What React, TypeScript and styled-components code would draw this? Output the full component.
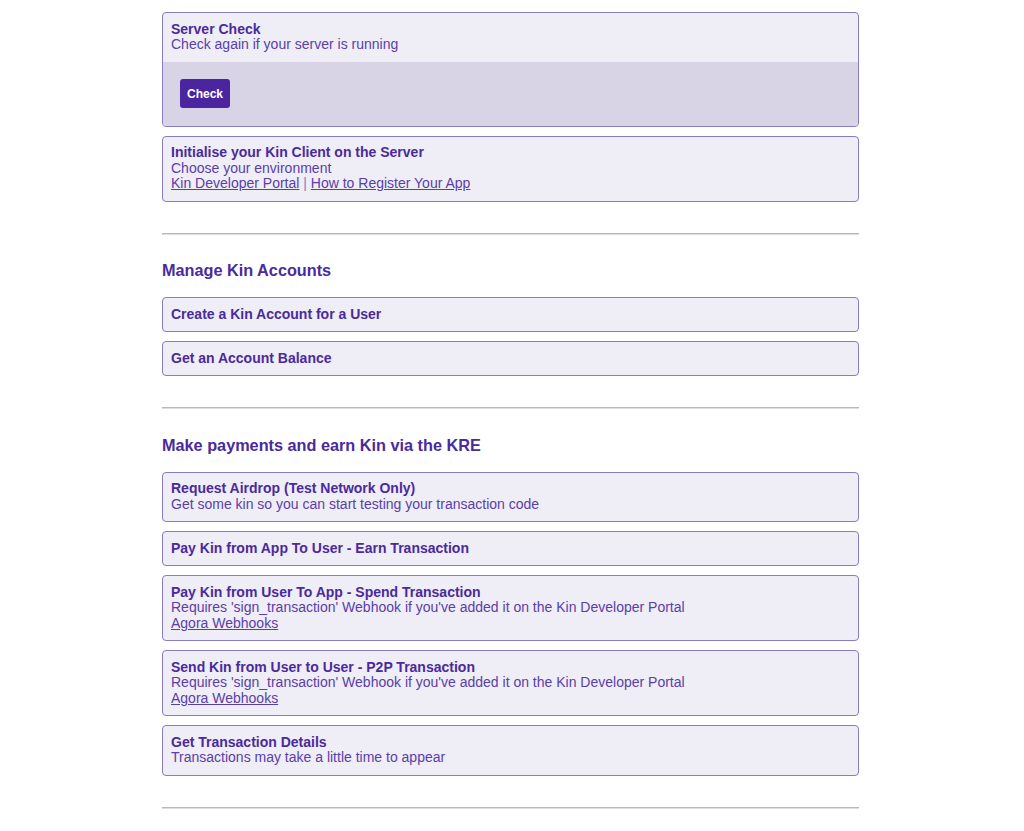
import React from "react";
import styled, { createGlobalStyle } from "styled-components";

const Global = createGlobalStyle`
  html, body { margin: 0; padding: 0; background: #ffffff; }
  body { font-family: "Liberation Sans", Arial, sans-serif; }
`;

const Page = styled.main`
  width: 697px;
  padding: 12px 0 0 162px;
  display: flex;
  flex-direction: column;
`;

const Card = styled.section<{ $gap?: number }>`
  border: 1px solid #8a7cc2;
  border-radius: 4px;
  background: #efedf5;
  overflow: hidden;
  margin-top: ${(p) => (p.$gap ?? 9)}px;
  color: #4a2a9c;
`;

const CardHeader = styled.div`
  padding: 8.5px 8px 9px 8px;
  display: flex;
  flex-direction: column;
`;

const Title = styled.div`
  font-size: 14px;
  line-height: 15.5px;
  font-weight: bold;
  color: #4a2a9c;
`;

const Text = styled.div`
  font-size: 14px;
  line-height: 15.5px;
  color: #5a3eaa;
`;

const Link = styled.a`
  color: #5a3eaa;
  text-decoration: underline;
  cursor: pointer;
`;

const Sep = styled.span`
  color: #8a7cc2;
`;

const CardBody = styled.div`
  background: #d9d4e5;
  padding: 17.5px 17px 17.5px;
`;

const Button = styled.button`
  display: block;
  font-family: "Liberation Sans", Arial, sans-serif;
  font-size: 12px;
  font-weight: bold;
  color: #ffffff;
  background: #4b24a0;
  border: none;
  border-radius: 3px;
  height: 29px;
  padding: 0 7px;
  cursor: pointer;
`;

const Divider = styled.div<{ $top?: number }>`
  margin-top: ${(p) => p.$top ?? 31}px;
  height: 0;
  border-top: 1px solid #b9b9b9;
  border-bottom: 1px solid #dedede;
`;

const Heading = styled.h2`
  margin: 25.5px 0 17px;
  font-size: 16.25px;
  line-height: 20px;
  font-weight: bold;
  color: #4a2a9c;
`;

type Item = { title: string; lines?: React.ReactNode[] };

const accountItems: Item[] = [
  { title: "Create a Kin Account for a User" },
  { title: "Get an Account Balance" },
];

const webhookLine = "Requires 'sign_transaction' Webhook if you've added it on the Kin Developer Portal";

const paymentItems: Item[] = [
  { title: "Request Airdrop (Test Network Only)", lines: ["Get some kin so you can start testing your transaction code"] },
  { title: "Pay Kin from App To User - Earn Transaction" },
  {
    title: "Pay Kin from User To App - Spend Transaction",
    lines: [webhookLine, <Link key="a">Agora Webhooks</Link>],
  },
  {
    title: "Send Kin from User to User - P2P Transaction",
    lines: [webhookLine, <Link key="a">Agora Webhooks</Link>],
  },
  { title: "Get Transaction Details", lines: ["Transactions may take a little time to appear"] },
];

function ItemCard({ item, gap }: { item: Item; gap?: number }) {
  return (
    <Card $gap={gap}>
      <CardHeader>
        <Title>{item.title}</Title>
        {item.lines?.map((l, i) => (
          <Text key={i}>{l}</Text>
        ))}
      </CardHeader>
    </Card>
  );
}

export default function App() {
  return (
    <>
      <Global />
      <Page>
        <Card $gap={0}>
          <CardHeader>
            <Title>Server Check</Title>
            <Text>Check again if your server is running</Text>
          </CardHeader>
          <CardBody>
            <Button>Check</Button>
          </CardBody>
        </Card>
        <Card>
          <CardHeader>
            <Title>Initialise your Kin Client on the Server</Title>
            <Text>Choose your environment</Text>
            <Text>
              <Link>Kin Developer Portal</Link> <Sep>|</Sep> <Link>How to Register Your App</Link>
            </Text>
          </CardHeader>
        </Card>

        <Divider />
        <Heading>Manage Kin Accounts</Heading>
        {accountItems.map((it, i) => (
          <ItemCard key={i} item={it} gap={i === 0 ? 0 : 9} />
        ))}

        <Divider />
        <Heading>Make payments and earn Kin via the KRE</Heading>
        {paymentItems.map((it, i) => (
          <ItemCard key={i} item={it} gap={i === 0 ? 0 : 9} />
        ))}

        <Divider />
      </Page>
    </>
  );
}
